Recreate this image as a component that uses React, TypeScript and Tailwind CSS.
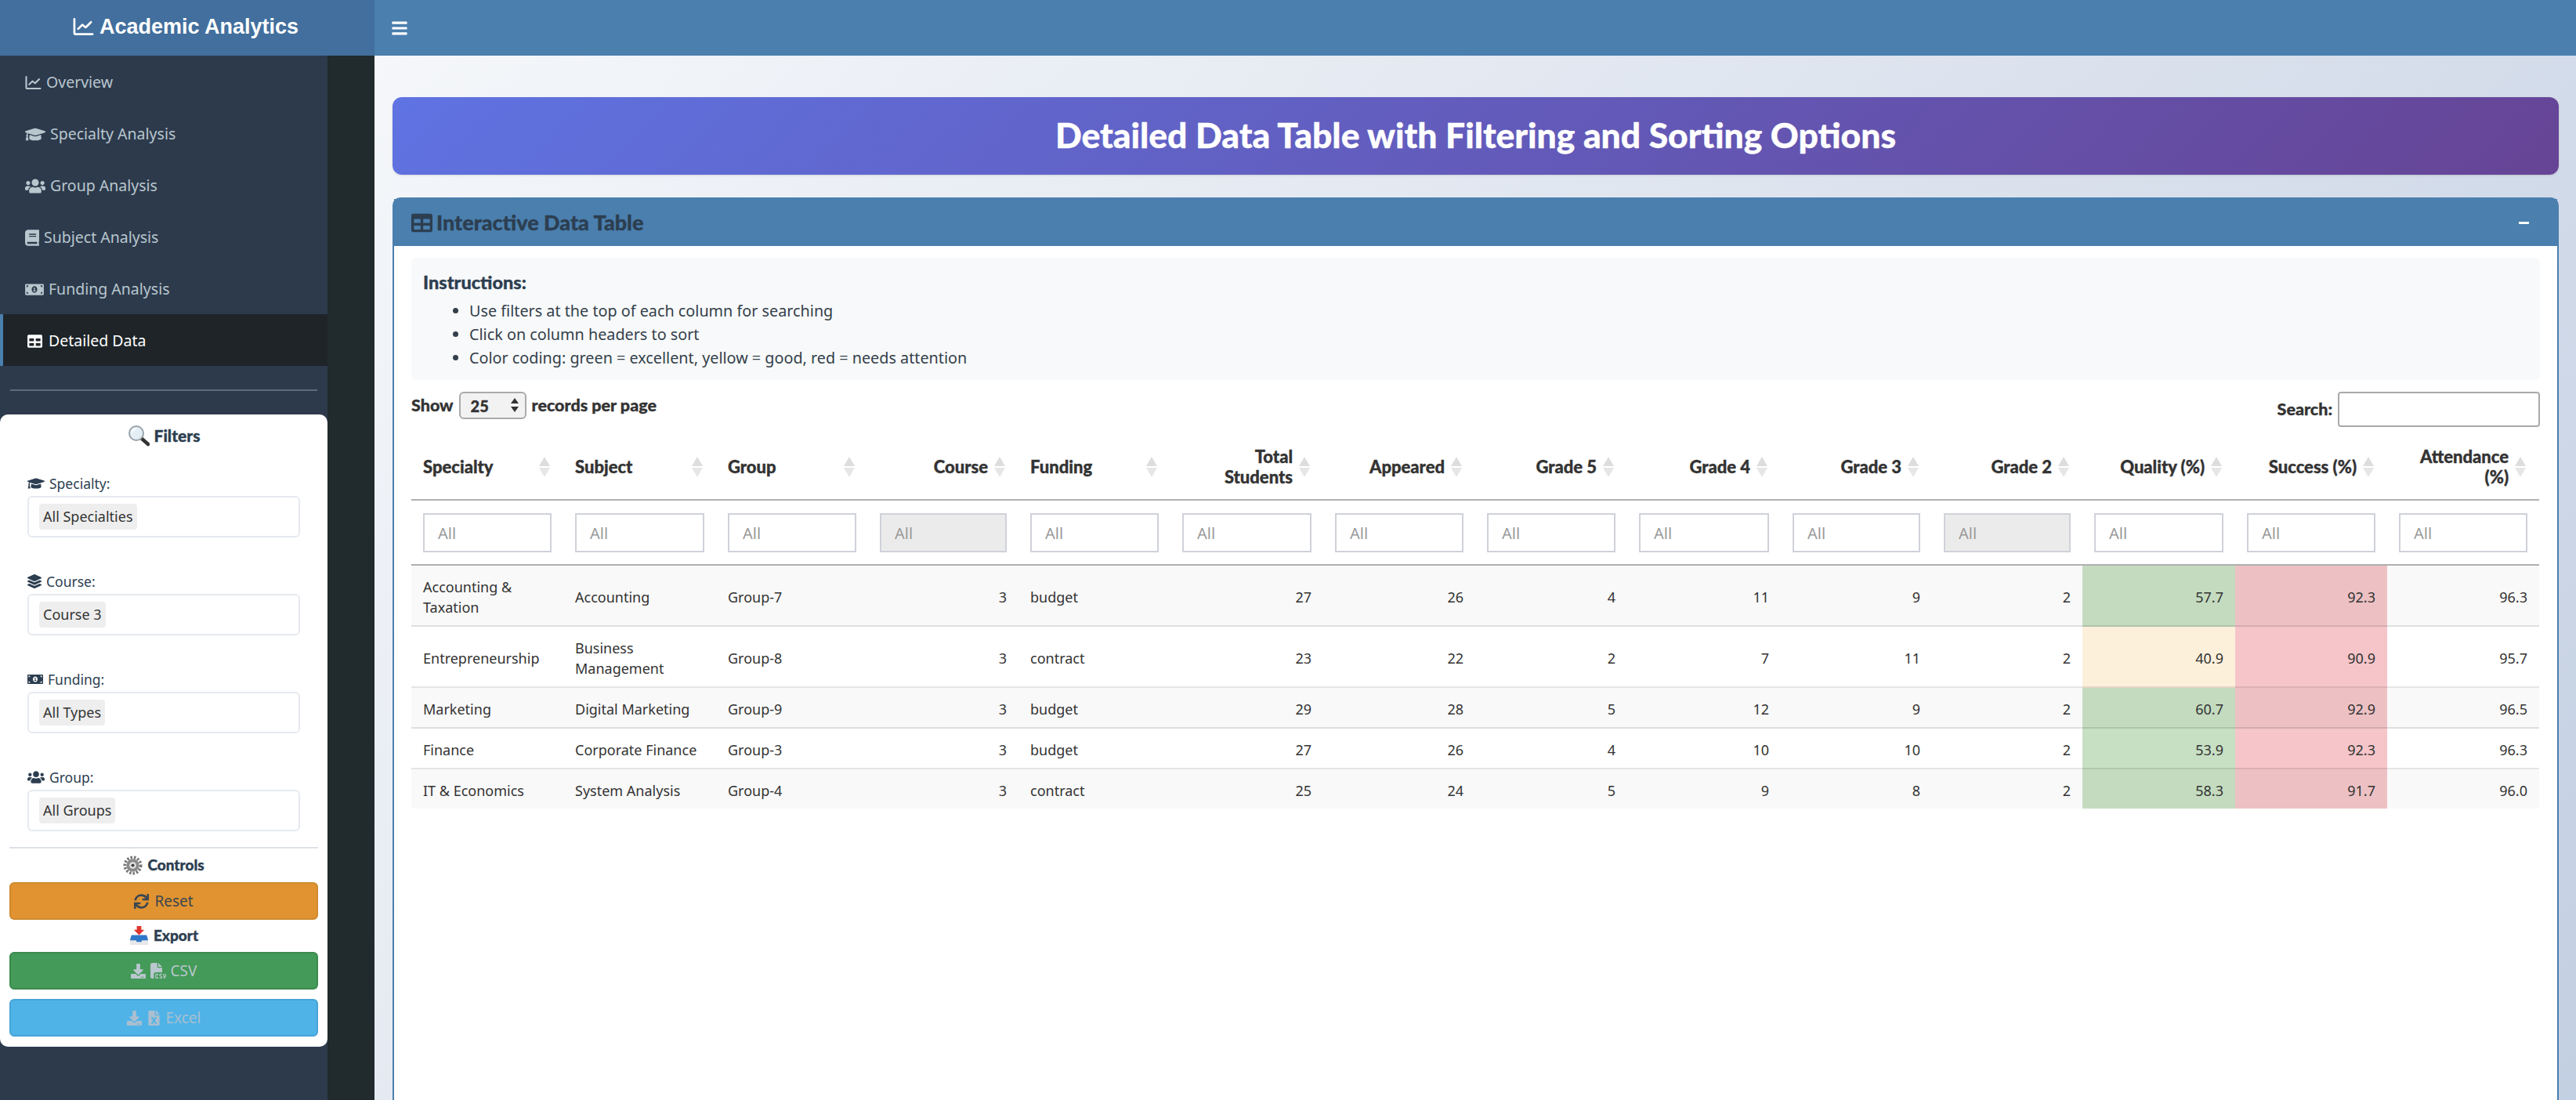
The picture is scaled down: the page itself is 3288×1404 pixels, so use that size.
import React from "react";
import {
  FaBars,
  FaBook,
  FaDownload,
  FaFileExcel,
  FaGraduationCap,
  FaLayerGroup,
  FaMinus,
  FaMoneyBillAlt,
  FaSync,
  FaTable,
  FaUsers,
} from "react-icons/fa";
import { FaFileCsv } from "react-icons/fa6";

const heading = "font-['Lato',sans-serif] font-black [-webkit-text-stroke:0.35px_currentColor]";

function ChartLine({ className }: { className?: string }) {
  return (
    <svg viewBox="0 0 28 24" fill="none" stroke="currentColor" strokeWidth="2.8" strokeLinecap="round" strokeLinejoin="round" className={className}>
      <path d="M2 2v18.5a1.5 1.5 0 0 0 1.5 1.5H26" />
      <path d="M7 15l5.5-5.5 4.5 3.5 7-7" />
    </svg>
  );
}

const navItems = [
  { label: "Overview", icon: ChartLine, size: "h-[19px] w-[21px]" },
  { label: "Specialty Analysis", icon: FaGraduationCap, size: "h-[21px] w-[26px]" },
  { label: "Group Analysis", icon: FaUsers, size: "h-[21px] w-[26px]" },
  { label: "Subject Analysis", icon: FaBook, size: "h-[21px] w-[18px]" },
  { label: "Funding Analysis", icon: FaMoneyBillAlt, size: "h-[19px] w-[24px]" },
];

const filters = [
  { label: "Specialty:", value: "All Specialties", icon: FaGraduationCap, size: "h-[18px] w-[22px]" },
  { label: "Course:", value: "Course 3", icon: FaLayerGroup, size: "h-[18px] w-[18px]" },
  { label: "Funding:", value: "All Types", icon: FaMoneyBillAlt, size: "h-[16px] w-[20px]" },
  { label: "Group:", value: "All Groups", icon: FaUsers, size: "h-[18px] w-[22px]" },
];

const columns: { label: React.ReactNode; width: string; right?: boolean; disabled?: boolean }[] = [
  { label: "Specialty", width: "w-[194px]" },
  { label: "Subject", width: "w-[195px]" },
  { label: "Group", width: "w-[194px]" },
  { label: "Course", width: "w-[192px]", right: true, disabled: true },
  { label: "Funding", width: "w-[194px]" },
  { label: <>Total<br />Students</>, width: "w-[195px]", right: true },
  { label: "Appeared", width: "w-[194px]", right: true },
  { label: "Grade 5", width: "w-[194px]", right: true },
  { label: "Grade 4", width: "w-[196px]", right: true },
  { label: "Grade 3", width: "w-[193px]", right: true },
  { label: "Grade 2", width: "w-[192px]", right: true, disabled: true },
  { label: "Quality (%)", width: "w-[195px]", right: true },
  { label: "Success (%)", width: "w-[194px]", right: true },
  { label: <>Attendance<br />(%)</>, width: "w-[194px]", right: true },
];

const rows = [
  ["Accounting & Taxation", "Accounting", "Group-7", "3", "budget", "27", "26", "4", "11", "9", "2", "57.7", "92.3", "96.3"],
  ["Entrepreneurship", "Business Management", "Group-8", "3", "contract", "23", "22", "2", "7", "11", "2", "40.9", "90.9", "95.7"],
  ["Marketing", "Digital Marketing", "Group-9", "3", "budget", "29", "28", "5", "12", "9", "2", "60.7", "92.9", "96.5"],
  ["Finance", "Corporate Finance", "Group-3", "3", "budget", "27", "26", "4", "10", "10", "2", "53.9", "92.3", "96.3"],
  ["IT & Economics", "System Analysis", "Group-4", "3", "contract", "25", "24", "5", "9", "8", "2", "58.3", "91.7", "96.0"],
];

function cellColor(col: number, row: number, value: string) {
  const odd = row % 2 === 0;
  if (col === 11) {
    if (Number(value) < 50) return "bg-[#fcf0db]";
    return odd ? "bg-[#c4dbbf]" : "bg-[#c7dfc3]";
  }
  if (col === 12) return odd ? "bg-[#edc1c4]" : "bg-[#f5c5c9]";
  return "";
}

function SortIcon() {
  return (
    <svg viewBox="0 0 14 26" className="absolute right-[17px] top-1/2 h-[26px] w-[14px] -translate-y-1/2">
      <path d="M7 0 14 12H0Z" fill="#dddddd" />
      <path d="M7 26 14 14H0Z" fill="#e6e6e6" />
    </svg>
  );
}

function MagnifierEmoji() {
  return (
    <svg viewBox="0 0 28 28" className="h-[28px] w-[28px]">
      <path d="M17 17l9 8" stroke="#333" strokeWidth="4.5" strokeLinecap="round" />
      <circle cx="11" cy="11" r="9" fill="#e4eef5" stroke="#9aa4ab" strokeWidth="2" />
      <path d="M5.5 10a6 6 0 0 1 5-5" stroke="#fff" strokeWidth="2" fill="none" />
    </svg>
  );
}

function GearEmoji() {
  return (
    <svg viewBox="0 0 26 26" className="h-[25px] w-[25px]">
      <circle cx="13" cy="13" r="10.5" fill="none" stroke="#777" strokeWidth="4" strokeDasharray="2.6 2" />
      <circle cx="13" cy="13" r="8.5" fill="#8a8a8a" />
      <circle cx="13" cy="13" r="4.5" fill="#e6e6e6" />
      <circle cx="13" cy="13" r="2.2" fill="#444" />
    </svg>
  );
}

function InboxEmoji() {
  return (
    <svg viewBox="0 0 26 26" className="h-[25px] w-[25px]">
      <path d="M1 14h24v11H1Z" fill="#e8e8ea" />
      <path d="M3 12h20l2 7H17l-1 2H10l-1-2H1Z" fill="#2f78c8" />
      <path d="M10 0h6v5h4l-7 7-7-7h4Z" fill="#e0352f" />
    </svg>
  );
}

export default function App() {
  return (
    <div className="flex h-[1404px] w-[3288px] flex-col overflow-hidden font-['Noto_Sans',sans-serif]">
      <header className="flex h-[71px] shrink-0 bg-[#4a7fae] text-white">
        <div className="flex w-[478px] items-center justify-center gap-[7px] bg-[#426f9d] pb-[3px] pr-[4px] font-['Liberation_Sans',sans-serif] text-[27px] font-bold">
          <ChartLine className="h-[24px] w-[27px]" />
          Academic Analytics
        </div>
        <button className="flex w-[64px] items-center justify-center text-[22px]">
          <FaBars />
        </button>
      </header>

      <div className="flex min-h-0 flex-1">
        <aside className="w-[478px] shrink-0 bg-[#212a2c]">
          <div className="h-full w-[418px] bg-[#2d3a4c]">
            <nav className="text-[19.5px] text-[#b8c7ce]">
              {navItems.map(({ label, icon: Icon, size }) => (
                <div key={label} className="flex h-[66px] items-center gap-[6px] pl-[32px] pt-[2px]">
                  <Icon className={size} />
                  {label}
                </div>
              ))}
              <div className="flex h-[66px] items-center gap-[7px] border-l-4 border-[#4a7fae] bg-[#1e2428] pl-[30px] pt-[2px] text-white">
                <FaTable className="h-[19px] w-[21px]" />
                Detailed Data
              </div>
            </nav>

            <div className="mx-[13px] mt-[30px] border-t-2 border-[#5f6b7a]" />

            <section className="mt-[30px] rounded-[10px] bg-white pb-[13px] text-[#2c3e50]">
              <h3 className={`${heading} flex h-[52px] items-center justify-center gap-[6px] pt-[2px] text-[21px]`}>
                <MagnifierEmoji />
                Filters
              </h3>
              <div className="px-[35px] pt-[20px]">
                {filters.map(({ label, value, icon: Icon, size }) => (
                  <div key={label} className="mb-[40px] last:mb-0">
                    <label className="flex h-[32px] items-center gap-[6px] text-[17.5px]">
                      <Icon className={size} />
                      {label}
                    </label>
                    <div className="flex h-[53px] items-center rounded-[6px] border-2 border-[#e6eaf0] px-[13px]">
                      <span className="flex h-[33px] items-center rounded-[4px] bg-[#eeeeee] px-[5px] text-[18px] text-[#333]">{value}</span>
                    </div>
                  </div>
                ))}
              </div>

              <div className="mx-[12px] mt-[20px] border-t-2 border-[#dde2e8]" />
              <div className="px-[12px]">
                <h4 className={`${heading} flex h-[43px] items-center justify-center gap-[6px] text-[19px]`}>
                  <GearEmoji />
                  Controls
                </h4>
                <button className="flex h-[48px] w-full items-center justify-center gap-[7px] rounded-[6px] border-2 border-[#cf8a2e] bg-[#e09330] text-[19px] text-[#3b4650]">
                  <FaSync /> Reset
                </button>
                <h4 className={`${heading} flex h-[41px] items-center justify-center gap-[6px] text-[19px]`}>
                  <InboxEmoji />
                  Export
                </h4>
                <button className="flex h-[48px] w-full items-center justify-center gap-[6px] rounded-[6px] border-2 border-[#3c8a4e] bg-[#449a58] text-[19px] text-[#b9c7ce]">
                  <FaDownload /> <FaFileCsv className="h-[20px] w-[20px]" /> CSV
                </button>
                <button className="mt-[12px] flex h-[48px] w-full items-center justify-center gap-[6px] rounded-[6px] border-2 border-[#46a3d5] bg-[#4fb3e8] text-[19px] text-[#a9bfd0]">
                  <FaDownload /> <FaFileExcel /> Excel
                </button>
              </div>
            </section>
          </div>
        </aside>

        <main className="min-w-0 flex-1 bg-[linear-gradient(135deg,#f5f7fa_0%,#c3cfe2_100%)] pl-[23px] pr-[22px] pt-[53px]">
          <div className={`${heading} flex h-[99px] items-center justify-center rounded-[12px] bg-[linear-gradient(135deg,#5f73e2_0%,#664495_100%)] pb-[3px] text-[44.4px] text-white shadow-sm`}>
            Detailed Data Table with Filtering and Sorting Options
          </div>

          <div className="mt-[29px] h-[1200px] rounded-t-[10px] border-2 border-[#4a7fae] bg-white">
            <div className="flex h-[60px] items-center justify-between bg-[#4a7fae] pl-[22px] pr-[35px]">
              <h2 className={`${heading} flex items-center gap-[5px] text-[27px] text-[#2c3e50]`}>
                <FaTable className="h-[27px] w-[27px]" />
                Interactive Data Table
              </h2>
              <FaMinus className="text-[15px] text-white" />
            </div>

            <div className="px-[22px] pt-[15px]">
              <div className="h-[156px] rounded-[6px] bg-[#f8f9fa] px-[15px] pt-[16px] text-[19.8px] text-[#2c3e50]">
                <p className={`${heading} h-[30px] text-[23.5px] leading-[30px]`}>Instructions:</p>
                <ul className="mt-[7px] list-disc pl-[59px] leading-[30px] text-[#333f4a]">
                  <li>Use filters at the top of each column for searching</li>
                  <li>Click on column headers to sort</li>
                  <li>Color coding: green = excellent, yellow = good, red = needs attention</li>
                </ul>
              </div>

              <div className={`${heading} flex h-[70px] items-start justify-between pt-[15px] text-[21.5px] text-[#333]`}>
                <div className="flex items-center gap-[7px]">
                  Show
                  <div className="relative">
                    <select defaultValue="25" className="h-[35px] w-[86px] appearance-none rounded-[6px] border-2 border-[#aaaaaa] bg-[#f2f2f2] pl-[13px] text-[20px]">
                      <option>10</option>
                      <option>25</option>
                      <option>50</option>
                    </select>
                    <svg viewBox="0 0 10 18" className="pointer-events-none absolute right-[10px] top-[8px] h-[18px] w-[10px]">
                      <path d="M5 0 10 7H0ZM5 18 10 11H0Z" fill="#333" />
                    </svg>
                  </div>
                  records per page
                </div>
                <div className="flex items-center gap-[7px]">
                  Search:
                  <input className="h-[45px] w-[258px] rounded-[4px] border-2 border-[#aaaaaa] bg-white" />
                </div>
              </div>

              <table className="w-[2716px] table-fixed border-separate border-spacing-0 text-[18px] text-[#333]">
                <colgroup>
                  {columns.map((c, i) => (
                    <col key={i} className={c.width} />
                  ))}
                </colgroup>
                <thead>
                  <tr>
                    {columns.map((c, i) => (
                      <th
                        key={i}
                        className={`${heading} relative h-[84px] border-b-2 border-[#b0b0b0] pl-[15px] pr-[39px] text-[22px] leading-[26px] ${c.right ? "text-right" : "text-left"}`}
                      >
                        {c.label}
                        <SortIcon />
                      </th>
                    ))}
                  </tr>
                  <tr>
                    {columns.map((c, i) => (
                      <th key={i} className="h-[83px] border-b-2 border-[#b0b0b0] px-[15px] font-normal">
                        <input
                          readOnly
                          placeholder="All"
                          className={`h-[50px] w-full border-2 border-[#d0d2da] px-[17px] pt-[2px] text-[20px] placeholder:text-[#999] ${c.disabled ? "bg-[#ebebeb]" : "bg-white"}`}
                        />
                      </th>
                    ))}
                  </tr>
                </thead>
                <tbody>
                  {rows.map((row, r) => (
                    <tr key={r} className={r % 2 === 0 ? "bg-[#f9f9f9]" : "bg-white"}>
                      {row.map((value, c) => (
                        <td
                          key={c}
                          className={`px-[15px] pb-[10px] pt-[14px] leading-[26px] ${r < rows.length - 1 ? "border-b-2 border-black/10" : ""} ${columns[c].right ? "text-right" : "text-left"} ${cellColor(c, r, value)}`}
                        >
                          {value}
                        </td>
                      ))}
                    </tr>
                  ))}
                </tbody>
              </table>
            </div>
          </div>
        </main>
      </div>
    </div>
  );
}
